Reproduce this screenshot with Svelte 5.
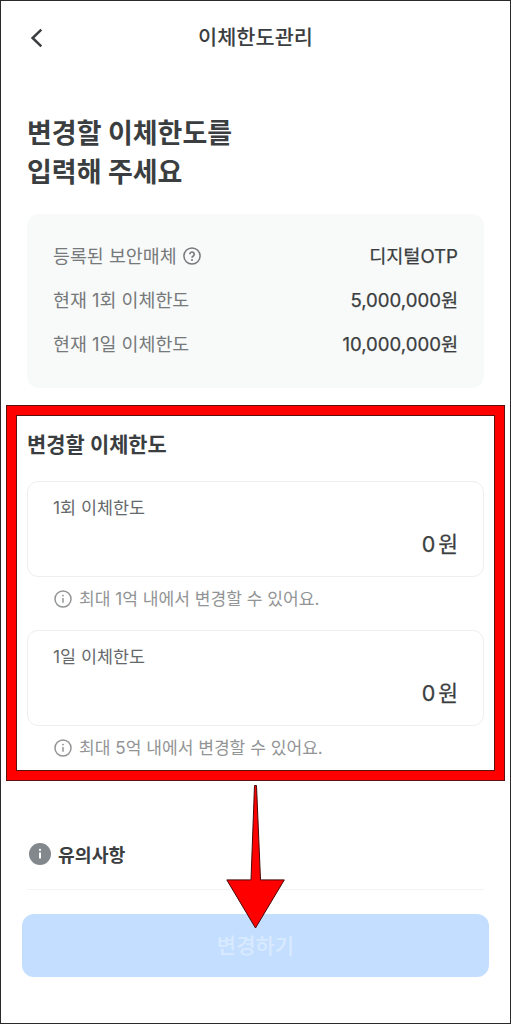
<script>
  const summary = [
    { label: '등록된 보안매체', value: '디지털OTP', help: true },
    { label: '현재 1회 이체한도', value: '5,000,000원' },
    { label: '현재 1일 이체한도', value: '10,000,000원' },
  ];

  const fields = [
    { label: '1회 이체한도', amount: 0, hint: '최대 1억 내에서 변경할 수 있어요.' },
    { label: '1일 이체한도', amount: 0, hint: '최대 5억 내에서 변경할 수 있어요.' },
  ];
</script>

<div class="screen">
  <header class="topbar">
    <button class="back" aria-label="back">
      <svg width="14" height="20" viewBox="0 0 14 20" fill="none" stroke="currentColor" stroke-width="2.5">
        <polyline points="11.3 1.6 2.6 10 11.3 18.4" />
      </svg>
    </button>
    <h1>이체한도관리</h1>
  </header>

  <h2 class="headline">변경할 이체한도를<br />입력해 주세요</h2>

  <dl class="summary">
    {#each summary as row}
      <div class="summary-row">
        <dt>
          {row.label}
          {#if row.help}
            <svg class="help" width="18" height="18" viewBox="0 0 18 18" fill="none" stroke="currentColor" stroke-width="1.5">
              <circle cx="9" cy="9" r="8.1" />
              <path d="M6.8 7.2a2.2 2.2 0 1 1 3.5 1.8c-.8.5-1.3.9-1.3 1.7" stroke-width="1.6" />
              <circle cx="9" cy="12.9" r="1" fill="currentColor" stroke="none" />
            </svg>
          {/if}
        </dt>
        <dd>{row.value}</dd>
      </div>
    {/each}
  </dl>

  <section class="limits">
    <h3>변경할 이체한도</h3>
    {#each fields as field}
      <div class="field">
        <span class="field-label">{field.label}</span>
        <span class="field-amount"><span class="number">{field.amount}</span>원</span>
      </div>
      <p class="hint">
        <svg width="18" height="18" viewBox="0 0 18 18" fill="none" stroke="currentColor" stroke-width="1.5">
          <circle cx="9" cy="9" r="8" />
          <path d="M9 7.9v4.9" stroke-width="1.5" />
          <circle cx="9" cy="5.6" r="0.95" fill="currentColor" stroke="none" />
        </svg>
        <span>{field.hint}</span>
      </p>
    {/each}
  </section>

  <div class="notice">
    <svg width="22" height="22" viewBox="0 0 22 22">
      <circle cx="11" cy="11" r="11" fill="#83888d" />
      <path d="M11 9.6v6" stroke="#fff" stroke-width="2" />
      <circle cx="11" cy="6.9" r="1.1" fill="#fff" />
    </svg>
    <span>유의사항</span>
  </div>

  <button class="submit" disabled>변경하기</button>

  <svg class="arrow" width="60" height="146" viewBox="0 0 60 146">
    <path d="M29.5 1.5h2L35.5 95.9H59.3L30.5 144L1.8 95.9H26z" fill="#fe0000" stroke="#4a0808" />
  </svg>
</div>

<style>
  :global(body) {
    background: #fff;
    font-family: Inter, "Noto Sans CJK KR", sans-serif;
    color: #3b3e40;
  }

  h1, h2, h3, dl, dd, p { margin: 0; }
  svg { display: block; flex-shrink: 0; }

  .screen {
    position: relative;
    box-sizing: border-box;
    width: 511px;
    height: 1024px;
    padding: 0 5px;
    border: 1px solid #2b292c;
    overflow: hidden;
  }

  .topbar {
    display: grid;
    grid-template-columns: 60px 1fr 60px;
    align-items: center;
    height: 73px;
  }
  .back {
    display: flex;
    padding: 0 0 0 24px;
    border: none;
    background: none;
    color: #3b3e40;
  }
  .topbar h1 {
    font-size: 20.8px;
    font-weight: 500;
    line-height: 30px;
    text-align: center;
  }

  .headline {
    margin: 40px 21px 0;
    font-size: 27px;
    font-weight: 700;
    line-height: 39px;
  }

  .summary {
    display: flex;
    flex-direction: column;
    gap: 14px;
    box-sizing: border-box;
    height: 174px;
    margin: 22px 21px 0;
    padding: 27px 26px;
    border-radius: 12px;
    background: #f8f9f9;
  }
  .summary-row {
    display: flex;
    justify-content: space-between;
    font-size: 18.4px;
    line-height: 30px;
  }
  .summary-row dt {
    display: flex;
    align-items: center;
    gap: 6px;
    color: #76797b;
  }
  .summary-row dd {
    font-size: 18.6px;
    font-weight: 400;
    -webkit-text-stroke: 0.25px currentColor;
  }

  .limits {
    box-sizing: border-box;
    height: 376px;
    margin-top: 17px;
    padding: 15px 11px 0;
    border: 10px solid #fe0000;
    outline: 1px solid #5c1010;
    outline-offset: -1px;
    box-shadow: inset 0 0 0 1px #5c1010;
  }
  .limits h3 {
    margin-bottom: 21px;
    font-size: 20.9px;
    font-weight: 600;
    line-height: 30px;
  }
  .field {
    display: flex;
    flex-direction: column;
    justify-content: space-between;
    box-sizing: border-box;
    height: 96px;
    padding: 13px 25px 16px;
    border: 1px solid #eeeef1;
    border-radius: 11px;
  }
  .field-label {
    font-size: 17.4px;
    line-height: 26px;
    color: #66696b;
  }
  .field-amount {
    align-self: flex-end;
    font-size: 21.5px;
    font-weight: 400;
    line-height: 32px;
    -webkit-text-stroke: 0.25px currentColor;
  }
  .number { margin-right: 3px; }
  .hint {
    display: flex;
    align-items: center;
    gap: 7px;
    height: 43px;
    margin-bottom: 10px;
    padding-left: 27px;
    font-size: 17.1px;
    line-height: 26px;
    color: #929496;
  }

  .notice {
    display: flex;
    align-items: center;
    gap: 7px;
    box-sizing: border-box;
    height: 109px;
    margin: 0 21px;
    padding: 38px 0 0 2px;
    border-bottom: 1px solid #f3f3f4;
    font-size: 18.3px;
    font-weight: 700;
  }

  .submit {
    display: block;
    width: 467px;
    height: 63px;
    margin: 24px 16px 0;
    padding: 0 0 4px;
    border: none;
    border-radius: 12px;
    background: #c4deff;
    color: #d9eaff;
    font-family: inherit;
    font-size: 21px;
    font-weight: 500;
  }

  .arrow {
    position: absolute;
    left: 224px;
    top: 783px;
  }
</style>
